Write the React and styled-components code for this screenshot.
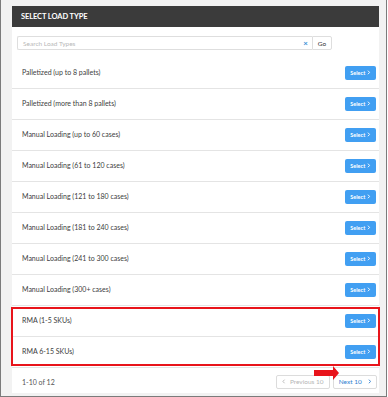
import React from "react";
import styled, { createGlobalStyle } from "styled-components";

const Global = createGlobalStyle`
  html, body { margin: 0; padding: 0; background: #ffffff; }
  * { box-sizing: border-box; }
  body { font-family: Lato, "Open Sans", "Liberation Sans", sans-serif; }
`;

const Frame = styled.div`
  position: relative;
  width: 387px;
  height: 397px;
  background: #f2f2f2;
  border-left: 1px solid #7b7b7b;
  border-right: 1px solid #7b7b7b;
  border-bottom: 1px solid #7b7b7b;
  padding: 6px 7px 3px 11px;
`;

const Panel = styled.div`
  background: #ffffff;
  height: 387px;
  display: flex;
  flex-direction: column;
`;

const Header = styled.div`
  height: 21px;
  background: #3b3b3b;
  color: #ffffff;
  font-weight: 700;
  font-size: 7.5px;
  letter-spacing: -0.1px;
  display: flex;
  align-items: center;
  padding-left: 9px;
`;

const SearchBar = styled.div`
  display: flex;
  padding: 9px 0 8px 5px;
  height: 31px;
`;

const SearchInput = styled.div`
  width: 295px;
  height: 14px;
  border: 1px solid #dedede;
  border-right: none;
  border-radius: 2px 0 0 2px;
  display: flex;
  align-items: center;
  justify-content: space-between;
  padding: 0 4px 0 5px;
  font-size: 6.5px;
  color: #b8b8b8;
`;

const Clear = styled.span`
  color: #3d8fd6;
  font-size: 8px;
  font-weight: 700;
  line-height: 1;
`;

const GoButton = styled.div`
  width: 20px;
  height: 14px;
  border: 1px solid #dedede;
  border-radius: 0 2px 2px 0;
  font-size: 6.5px;
  color: #333;
  display: flex;
  align-items: center;
  justify-content: center;
`;

const Row = styled.div`
  height: 31px;
  border-bottom: 1px solid #e4e4e4;
  display: flex;
  align-items: center;
  justify-content: space-between;
  padding: 0 3px 1px 10px;
`;

const RowLabel = styled.span`
  font-size: 7px;
  color: #404040;
  padding-bottom: 2px;
`;

const SelectButton = styled.div`
  width: 31px;
  height: 14px;
  border-radius: 2px;
  background: #419ff2;
  color: #fff;
  font-size: 5.5px;
  font-weight: 700;
  display: flex;
  align-items: center;
  justify-content: center;
  gap: 2px;
`;

const Chevron = ({ dir = "right", color = "currentColor", size = 4 }) => (
  <svg width={size} height={size * 1.4} viewBox="0 0 4 6" style={{ display: "block" }}>
    <path
      d={dir === "right" ? "M1 0.8 L3 3 L1 5.2" : "M3 0.8 L1 3 L3 5.2"}
      fill="none"
      stroke={color}
      strokeWidth="1.1"
    />
  </svg>
);

const Footer = styled.div`
  flex: 1;
  display: flex;
  align-items: center;
  justify-content: space-between;
  padding: 2px 2px 0 10px;
`;

const Count = styled.span`
  font-size: 7px;
  color: #555;
`;

const Pager = styled.div`
  display: flex;
  gap: 3px;
`;

const PageButton = styled.div`
  height: 14px;
  width: ${(p) => p.$w}px;
  border: 1px solid #dcdcdc;
  border-radius: 2px;
  font-size: 6.5px;
  color: ${(p) => (p.$disabled ? "#b5b5b5" : "#2f80d0")};
  display: flex;
  align-items: center;
  justify-content: center;
  gap: ${(p) => p.$gap}px;
`;

const Highlight = styled.div`
  position: absolute;
  left: 10px;
  top: 307px;
  width: 369px;
  height: 59px;
  border: 2px solid #e8141b;
  pointer-events: none;
`;

const Arrow = styled.svg`
  position: absolute;
  left: 313px;
  top: 366px;
`;

const items = [
  "Palletized (up to 8 pallets)",
  "Palletized (more than 8 pallets)",
  "Manual Loading (up to 60 cases)",
  "Manual Loading (61 to 120 cases)",
  "Manual Loading (121 to 180 cases)",
  "Manual Loading (181 to 240 cases)",
  "Manual Loading (241 to 300 cases)",
  "Manual Loading (300+ cases)",
  "RMA (1-5 SKUs)",
  "RMA 6-15 SKUs)",
];

export default function App() {
  return (
    <>
      <Global />
      <Frame>
        <Panel>
          <Header>SELECT LOAD TYPE</Header>
          <SearchBar>
            <SearchInput>
              <span>Search Load Types</span>
              <Clear>×</Clear>
            </SearchInput>
            <GoButton>Go</GoButton>
          </SearchBar>
          {items.map((t) => (
            <Row key={t}>
              <RowLabel>{t}</RowLabel>
              <SelectButton>
                Select <Chevron size={3.5} />
              </SelectButton>
            </Row>
          ))}
          <Footer>
            <Count>1-10 of 12</Count>
            <Pager>
              <PageButton $w={54} $gap={4} $disabled>
                <Chevron dir="left" size={3.5} color="#b5b5b5" /> Previous 10
              </PageButton>
              <PageButton $w={44} $gap={6}>
                Next 10 <Chevron size={3.5} color="#2f80d0" />
              </PageButton>
            </Pager>
          </Footer>
        </Panel>
        <Highlight />
        <Arrow width="25" height="15" viewBox="0 0 25 15">
          <polygon points="0,4 19,4 19,0 25,7 19,14 19,10 0,10" fill="#e8141b" />
        </Arrow>
      </Frame>
    </>
  );
}
